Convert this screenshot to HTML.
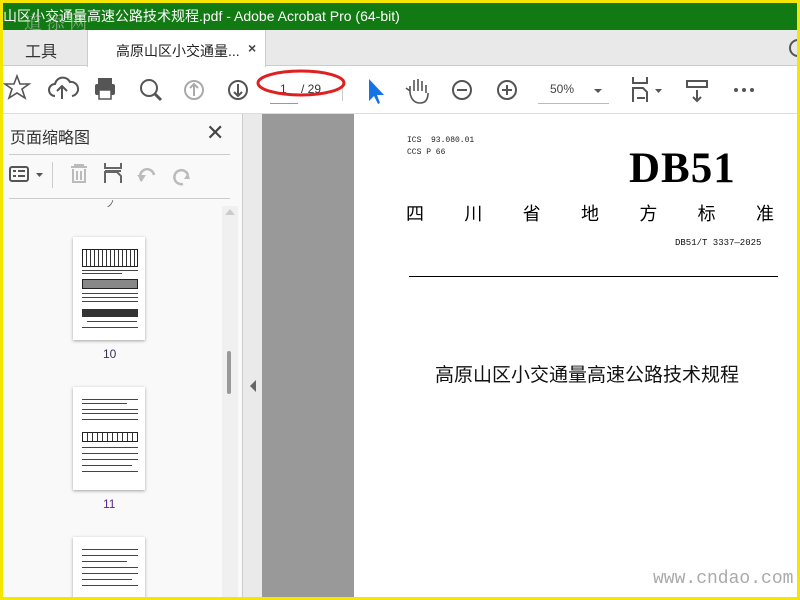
<!DOCTYPE html>
<html><head><meta charset="utf-8"><style>
*{margin:0;padding:0;box-sizing:border-box}
body{width:800px;height:600px;overflow:hidden;background:#fff;font-family:"Liberation Sans","Noto Sans CJK SC",sans-serif;position:relative}
.a{position:absolute}
svg{position:absolute}
.ic{stroke:#555;fill:none;stroke-width:2}
.thumb{position:absolute;background:#fff;box-shadow:0 1px 3px rgba(0,0,0,.35)}
.ln{position:absolute;background:#444;height:1px}
</style></head><body>
<div class="a" style="left:0;top:0;width:800px;height:600px;background:#fff;overflow:hidden">
<!-- title -->
<div class="a" style="left:3px;top:3px;width:794px;height:27px;background:#127a12;color:#fff;font-size:14px;line-height:27px;white-space:nowrap">山区小交通量高速公路技术规程.pdf - Adobe Acrobat Pro (64-bit)</div>
<div class="a" style="left:24px;top:9px;color:rgba(200,200,200,.6);font-size:18px;font-family:'Noto Serif CJK SC',serif">道 添 网</div>
<!-- tabs -->
<div class="a" style="left:0;top:30px;width:800px;height:36px;background:#e9e9e9;border-bottom:1px solid #ccc"></div>
<div class="a" style="left:87px;top:30px;width:179px;height:37px;background:#fff;border-left:1px solid #ccc;border-right:1px solid #ccc"></div>
<div class="a" style="left:25px;top:38px;font-size:16px;color:#333">工具</div>
<div class="a" style="left:116px;top:41px;font-size:14px;color:#222">高原山区小交通量...</div>
<div class="a" style="left:248px;top:40px;font-size:14px;color:#444;font-weight:bold">×</div>
<div class="a" style="left:789px;top:39px;width:18px;height:18px;border:2px solid #555;border-radius:50%"></div>
<!-- toolbar -->
<div class="a" style="left:0;top:67px;width:800px;height:47px;background:#fff;border-bottom:1px solid #ddd"></div>
<svg width="800" height="50" style="left:0;top:65px" class="ic">
<polygon points="17,11 20,19 29,19 22,24 25,33 17,28 9,33 12,24 5,19 14,19" stroke="#555" stroke-width="1.6"/>
<path d="M55,31 a6,6 0 0 1 0,-12 a8,8 0 0 1 15,-2 a6,6 0 0 1 2,14 M62,34 V21 M57,26 l5,-5 l5,5" stroke="#555"/>
<rect x="95" y="19" width="20" height="11" rx="2" fill="#555" stroke="none"/><rect x="98" y="13" width="14" height="6" fill="#555" stroke="none"/><rect x="99" y="25" width="12" height="9" fill="#fff" stroke="#555" stroke-width="1.5"/>
<circle cx="149" cy="23" r="8" stroke="#555"/><path d="M155,29 l6,6" stroke="#555" stroke-width="3"/>
<circle cx="194" cy="25" r="9" stroke="#aaa"/><path d="M194,31 V19 M190,23 l4,-4 l4,4" stroke="#aaa"/>
<circle cx="238" cy="25" r="9" stroke="#555"/><path d="M238,19 V31 M234,27 l4,4 l4,-4" stroke="#555"/>
<path d="M369,14 V36 L374,31 L378,39 L380,38 L377,30 L384,30 Z" fill="#1473e6" stroke="none"/>
<path d="M410,28 V21 M414,26 V15 M418,26 V14 M422,26 V16 M426,28 V20 M410,28 q2,10 10,10 q8,0 8,-10 M410,26 l-4,-3" stroke="#555" stroke-width="1.6"/>
<circle cx="462" cy="25" r="9" stroke="#555"/><path d="M457,25 h10" stroke="#555"/>
<circle cx="507" cy="25" r="9" stroke="#555"/><path d="M502,25 h10 M507,20 v10" stroke="#555"/>
<path d="M594,24 h8 l-4,4z" fill="#555" stroke="none"/>
<path d="M633,12 v6 h14 v-6 M633,37 v-14 h10 l4,4 v10 M637,33 h8" stroke="#555"/>
<path d="M655,24 h7 l-3.5,4z" fill="#555" stroke="none"/>
<rect x="687" y="16" width="20" height="6" stroke="#555"/><path d="M697,25 v11 M693,32 l4,4 l4,-4" stroke="#555"/>
<circle cx="736" cy="25" r="2" fill="#555" stroke="none"/><circle cx="744" cy="25" r="2" fill="#555" stroke="none"/><circle cx="752" cy="25" r="2" fill="#555" stroke="none"/>
</svg>
<div class="a" style="left:270px;top:103px;width:28px;height:1px;background:#999"></div>
<div class="a" style="left:280px;top:82px;font-size:12px;color:#333">1</div>
<div class="a" style="left:301px;top:82px;font-size:12px;color:#333">/ 29</div>
<div class="a" style="left:342px;top:79px;width:1px;height:22px;background:#ccc"></div>
<div class="a" style="left:550px;top:82px;font-size:12px;color:#444">50%</div>
<div class="a" style="left:538px;top:103px;width:71px;height:1px;background:#bbb"></div>
<svg width="96" height="32" style="left:254px;top:67px"><ellipse cx="47" cy="16" rx="43" ry="12" fill="none" stroke="#e02020" stroke-width="3"/></svg>
<!-- left panel -->
<div class="a" style="left:0;top:114px;width:243px;height:486px;background:#f9f9f9"></div>
<div class="a" style="left:10px;top:124px;font-size:16px;color:#333">页面缩略图</div>
<div class="a" style="left:206px;top:120px;font-size:22px;color:#444">✕</div>
<div class="a" style="left:9px;top:154px;width:221px;height:1px;background:#ccc"></div>
<div class="a" style="left:9px;top:198px;width:221px;height:1px;background:#ccc"></div>
<div class="a" style="left:52px;top:162px;width:1px;height:26px;background:#ccc"></div>
<svg width="230" height="30" style="left:0;top:161px">
<rect x="10" y="6" width="18" height="14" rx="2" fill="none" stroke="#555" stroke-width="2"/><path d="M13,10h3M18,10h7M13,15h3M18,15h7" stroke="#555" stroke-width="2"/>
<path d="M36,12h7l-3.5,4z" fill="#555"/>
<path d="M71,6h16M75,6v-2h8v2M73,8v13h12v-13M77,10v9M81,10v9" stroke="#bbb" stroke-width="2" fill="none"/>
<path d="M105,2v5h16v-5M105,22v-11h12l4,4v7M105,10h16" stroke="#666" stroke-width="2" fill="none"/>
<path d="M142,20 a7,7 0 1 1 12,-6" stroke="#bbb" stroke-width="2.5" fill="none"/><path d="M137,14 l5,6 l4,-6z" fill="#bbb"/>
<path d="M188,14 a7,7 0 1 0 -5,9" stroke="#bbb" stroke-width="2.5" fill="none"/><path d="M184,18 l6,0 l-2,-6z" fill="#bbb"/>
</svg>
<div class="a" style="left:222px;top:206px;width:16px;height:394px;background:#f0f0f0"></div>
<svg width="16" height="10" style="left:222px;top:207px"><path d="M3,8h10l-5,-6z" fill="#ccc"/></svg>
<div class="a" style="left:227px;top:351px;width:4px;height:43px;background:#999;border-radius:2px"></div>
<div class="a" style="left:106px;top:197px;font-size:9px;color:#555">ノ</div>
<div class="thumb" style="left:73px;top:237px;width:72px;height:103px">
<div class="a" style="left:9px;top:12px;width:56px;height:18px;border:1px solid #222;background:repeating-linear-gradient(90deg,#fff 0 3px,#333 3px 4px)"></div>
<div class="ln" style="left:9px;top:33px;width:56px"></div><div class="ln" style="left:9px;top:36px;width:40px"></div>
<div class="a" style="left:9px;top:42px;width:56px;height:10px;border:1px solid #222;background:#888"></div>
<div class="ln" style="left:9px;top:56px;width:56px"></div><div class="ln" style="left:9px;top:60px;width:56px"></div><div class="ln" style="left:9px;top:64px;width:56px"></div>
<div class="a" style="left:9px;top:72px;width:56px;height:8px;background:#333"></div>
<div class="ln" style="left:14px;top:84px;width:50px"></div><div class="ln" style="left:9px;top:90px;width:56px"></div>
</div>
<div class="a" style="left:103px;top:347px;font-size:12px;color:#335">10</div>
<div class="thumb" style="left:73px;top:387px;width:72px;height:103px">
<div class="ln" style="left:9px;top:12px;width:56px"></div><div class="ln" style="left:9px;top:16px;width:45px"></div><div class="ln" style="left:9px;top:22px;width:56px"></div><div class="ln" style="left:9px;top:26px;width:56px"></div><div class="ln" style="left:9px;top:32px;width:56px"></div>
<div class="a" style="left:9px;top:45px;width:56px;height:10px;border:1px solid #222;background:repeating-linear-gradient(90deg,#fff 0 4px,#333 4px 5px)"></div>
<div class="ln" style="left:9px;top:60px;width:56px"></div><div class="ln" style="left:9px;top:66px;width:56px"></div><div class="ln" style="left:9px;top:72px;width:56px"></div><div class="ln" style="left:9px;top:78px;width:50px"></div><div class="ln" style="left:9px;top:84px;width:56px"></div>
</div>
<div class="a" style="left:103px;top:497px;font-size:12px;color:#5a2a8a">11</div>
<div class="thumb" style="left:73px;top:537px;width:72px;height:70px">
<div class="ln" style="left:9px;top:12px;width:56px"></div><div class="ln" style="left:9px;top:18px;width:56px"></div><div class="ln" style="left:9px;top:24px;width:45px"></div><div class="ln" style="left:9px;top:30px;width:56px"></div><div class="ln" style="left:9px;top:36px;width:56px"></div><div class="ln" style="left:9px;top:42px;width:50px"></div><div class="ln" style="left:9px;top:48px;width:56px"></div>
</div>
<!-- separators -->
<div class="a" style="left:242px;top:114px;width:1px;height:486px;background:#ccc"></div>
<div class="a" style="left:243px;top:114px;width:19px;height:486px;background:#eaeaea"></div>
<svg width="10" height="14" style="left:248px;top:379px"><path d="M8,1v12l-6,-6z" fill="#666"/></svg>
<div class="a" style="left:262px;top:114px;width:92px;height:486px;background:#999"></div>
<div class="a" style="left:354px;top:114px;width:446px;height:486px;background:#fff"></div>
<!-- page content -->
<div class="a" style="left:407px;top:136px;font-size:8px;color:#222;font-family:'Liberation Mono',monospace">ICS&nbsp;&nbsp;93.080.01</div>
<div class="a" style="left:407px;top:148px;font-size:8px;color:#222;font-family:'Liberation Mono',monospace">CCS&nbsp;P 66</div>
<div class="a" style="left:629px;top:144px;font-size:43px;font-weight:bold;color:#000;font-family:'Liberation Serif',serif;letter-spacing:1px">DB51</div>
<div class="a" style="left:406px;top:200px;width:368px;display:flex;justify-content:space-between;font-size:18px;color:#000;font-family:'Noto Sans CJK SC',sans-serif"><span>四</span><span>川</span><span>省</span><span>地</span><span>方</span><span>标</span><span>准</span></div>
<div class="a" style="left:675px;top:238px;font-size:9px;color:#111;font-family:'Liberation Mono',monospace">DB51/T 3337—2025</div>
<div class="a" style="left:409px;top:276px;width:369px;height:1px;background:#000"></div>
<div class="a" style="left:435px;top:360px;font-size:19px;color:#111;font-family:'Noto Sans CJK SC',sans-serif">高原山区小交通量高速公路技术规程</div>
<div class="a" style="left:653px;top:569px;font-size:18px;color:#aaa;font-family:'Liberation Mono',monospace">www.cndao.com</div>
</div>
<!-- yellow frame -->
<div class="a" style="left:0;top:0;width:800px;height:3px;background:#f5e600"></div>
<div class="a" style="left:0;top:597px;width:800px;height:3px;background:#f5e600"></div>
<div class="a" style="left:0;top:0;width:3px;height:600px;background:#f5e600"></div>
<div class="a" style="left:797px;top:0;width:3px;height:600px;background:#f5e600"></div>
</body></html>
